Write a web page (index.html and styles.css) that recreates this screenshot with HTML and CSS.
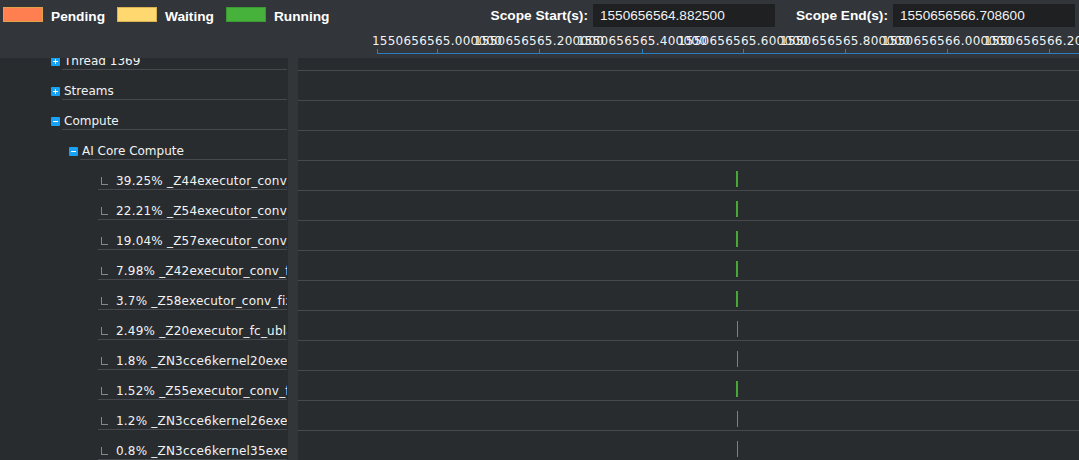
FILE: index.html
```html
<!DOCTYPE html>
<html lang="en">
<head>
<meta charset="utf-8">
<title>Timeline</title>
<link rel="stylesheet" href="styles.css">
</head>
<body>
<div class="app">
  <header class="header">
    <div class="toolbar">
      <div class="legend">
        <span class="swatch swatch-pending"></span><span class="legend-label">Pending</span>
        <span class="swatch swatch-waiting"></span><span class="legend-label">Waiting</span>
        <span class="swatch swatch-running"></span><span class="legend-label">Running</span>
      </div>
      <div class="scope">
        <label class="scope-label">Scope Start(s):</label>
        <input class="scope-input scope-start" value="1550656564.882500">
        <label class="scope-label">Scope End(s):</label>
        <input class="scope-input" value="1550656566.708600">
      </div>
    </div>
    <div class="ruler-row">
      <div class="ruler">
        <div class="axis-line"></div>
        <div class="tick" style="left:0px"></div>
        <div class="tick" style="left:60px"><span class="tick-label">1550656565.000000</span></div>
        <div class="tick" style="left:162px"><span class="tick-label">1550656565.200000</span></div>
        <div class="tick" style="left:265px"><span class="tick-label">1550656565.400000</span></div>
        <div class="tick" style="left:366px"><span class="tick-label">1550656565.600000</span></div>
        <div class="tick" style="left:468px"><span class="tick-label">1550656565.800000</span></div>
        <div class="tick" style="left:570px"><span class="tick-label">1550656566.000000</span></div>
        <div class="tick" style="left:672px"><span class="tick-label">1550656566.200000</span></div>
        <div class="tick" style="left:774px"><span class="tick-label">1550656566.400000</span></div>
      </div>
    </div>
  </header>
  <div class="main">
    <div class="tree">
      <ul class="tree-list">
        <li class="node lvl1">
          <span class="toggle"><svg width="9" height="9" viewBox="0 0 9 9"><rect width="9" height="9" rx="1" fill="#17a2f5"/><rect x="2" y="4" width="5" height="1" fill="#fff"/><rect x="4" y="2" width="1" height="5" fill="#fff"/></svg></span>
          <span class="node-label">Thread 1369</span>
        </li>
        <li class="node lvl1">
          <span class="toggle"><svg width="9" height="9" viewBox="0 0 9 9"><rect width="9" height="9" rx="1" fill="#17a2f5"/><rect x="2" y="4" width="5" height="1" fill="#fff"/><rect x="4" y="2" width="1" height="5" fill="#fff"/></svg></span>
          <span class="node-label">Streams</span>
        </li>
        <li class="node lvl1">
          <span class="toggle"><svg width="9" height="9" viewBox="0 0 9 9"><rect width="9" height="9" rx="1" fill="#17a2f5"/><rect x="2" y="4" width="5" height="1" fill="#fff"/></svg></span>
          <span class="node-label">Compute</span>
        </li>
        <li class="node lvl2">
          <span class="toggle"><svg width="9" height="9" viewBox="0 0 9 9"><rect width="9" height="9" rx="1" fill="#17a2f5"/><rect x="2" y="4" width="5" height="1" fill="#fff"/></svg></span>
          <span class="node-label">AI Core Compute</span>
        </li>
        <li class="node leaf"><span class="node-label"><span class="corner"></span>39.25% _Z44executor_conv_fp16_layer0</span></li>
        <li class="node leaf"><span class="node-label"><span class="corner"></span>22.21% _Z54executor_conv_fp16_layer1</span></li>
        <li class="node leaf"><span class="node-label"><span class="corner"></span>19.04% _Z57executor_conv_fp16_layer2</span></li>
        <li class="node leaf"><span class="node-label"><span class="corner"></span>7.98% _Z42executor_conv_fp16_layer3</span></li>
        <li class="node leaf"><span class="node-label"><span class="corner"></span>3.7% _Z58executor_conv_fixpipe_layer</span></li>
        <li class="node leaf"><span class="node-label"><span class="corner"></span>2.49% _Z20executor_fc_ublas_layer</span></li>
        <li class="node leaf"><span class="node-label"><span class="corner"></span>1.8% _ZN3cce6kernel20executor_pool</span></li>
        <li class="node leaf"><span class="node-label"><span class="corner"></span>1.52% _Z55executor_conv_fp16_layer4</span></li>
        <li class="node leaf"><span class="node-label"><span class="corner"></span>1.2% _ZN3cce6kernel26executor_relu</span></li>
        <li class="node leaf"><span class="node-label"><span class="corner"></span>0.8% _ZN3cce6kernel35executor_add</span></li>
      </ul>
    </div>
    <div class="splitter"></div>
    <div class="timeline">
      <div class="tl-list">
        <div class="tl-row"></div>
        <div class="tl-row"></div>
        <div class="tl-row"></div>
        <div class="tl-row"></div>
        <div class="tl-row"><span class="bar bar-wide" style="left:438px"></span></div>
        <div class="tl-row"><span class="bar bar-wide" style="left:438px"></span></div>
        <div class="tl-row"><span class="bar bar-wide" style="left:438px"></span></div>
        <div class="tl-row"><span class="bar bar-wide" style="left:438px"></span></div>
        <div class="tl-row"><span class="bar bar-wide" style="left:438px"></span></div>
        <div class="tl-row"><span class="bar bar-thin" style="left:439px"></span></div>
        <div class="tl-row"><span class="bar bar-thin" style="left:439px"></span></div>
        <div class="tl-row"><span class="bar bar-wide" style="left:438px"></span></div>
        <div class="tl-row"><span class="bar bar-thin" style="left:439px"></span></div>
        <div class="tl-row"><span class="bar bar-thin" style="left:439px"></span></div>
      </div>
    </div>
  </div>
</div>
</body>
</html>
```

FILE: styles.css
```css
html, body {
  margin: 0;
  padding: 0;
  background: #292c2f;
  overflow: hidden;
}

.app {
  width: 1079px;
  height: 460px;
  display: flex;
  flex-direction: column;
  overflow: hidden;
  font-family: "DejaVu Sans", Verdana, sans-serif;
  font-size: 12px;
  color: #f2f2f2;
}

/* ---------- header ---------- */
.header {
  flex: 0 0 58px;
  background: #32353a;
  display: flex;
  flex-direction: column;
  overflow: hidden;
}

.toolbar {
  height: 31px;
  display: flex;
  flex-shrink: 0;
}

.legend {
  display: flex;
  align-items: flex-start;
  padding-left: 3px;
}

.swatch {
  width: 40px;
  height: 15px;
  margin-top: 7px;
  box-sizing: border-box;
  border: 1px solid;
}
.swatch-pending { background: #ff7f50; border-color: #dfa24a; }
.swatch-waiting { background: #ffd96f; border-color: #d9b251; }
.swatch-running { background: #47b23b; border-color: #3b9a33; }

.legend-label {
  margin: 9px 12px 0 8px;
  font-family: "Liberation Sans", Arial, sans-serif;
  font-weight: bold;
  font-size: 13.7px;
  line-height: 16px;
  color: #ffffff;
}

.scope {
  margin-left: auto;
  margin-right: 4px;
  display: flex;
  align-items: center;
}

.scope-label {
  font-family: "Liberation Sans", Arial, sans-serif;
  font-weight: bold;
  font-size: 13.7px;
  line-height: 16px;
  color: #ffffff;
  margin-right: 5px;
}

.scope-input {
  width: 182px;
  height: 23px;
  box-sizing: border-box;
  border: none;
  outline: none;
  margin: 0;
  padding: 0 7px;
  background: #1f2022;
  color: #f2f2f2;
  font-family: "Liberation Sans", Arial, sans-serif;
  font-size: 13.6px;
}
.scope-start { margin-right: 21px; }

.ruler-row {
  flex: 1;
  padding-left: 377px;
}

.ruler {
  position: relative;
  width: 931px;
  height: 27px;
}

.axis-line {
  position: absolute;
  left: 0;
  right: 0;
  top: 22px;
  height: 1px;
  background: #2a7fc0;
}

.tick {
  position: absolute;
  top: 18px;
  width: 1px;
  height: 5px;
  background: #2a7fc0;
}

.tick-label {
  position: absolute;
  top: -15px;
  left: 0;
  transform: translateX(-50%);
  white-space: nowrap;
  line-height: 14px;
  font-size: 12px;
  letter-spacing: 0.25px;
  color: #f2f2f2;
}

/* ---------- main ---------- */
.main {
  flex: 1;
  display: flex;
  overflow: hidden;
}

.tree {
  width: 288px;
  flex-shrink: 0;
  overflow: hidden;
  padding-right: 1px;
  box-sizing: border-box;
}

.tree-list {
  list-style: none;
  margin: -18px 0 0 0;
  padding: 0;
}

.node {
  display: flex;
  height: 30px;
}
.lvl1 { padding-left: 51px; }
.lvl2 { padding-left: 69px; }
.leaf { padding-left: 98px; }

.toggle {
  width: 9px;
  height: 9px;
  margin-top: 17px;
  margin-right: 2px;
  flex-shrink: 0;
}
.toggle svg { display: block; }

.node-label {
  flex: 1;
  min-width: 0;
  height: 30px;
  box-sizing: border-box;
  padding: 14px 0 0 2px;
  line-height: 14px;
  white-space: nowrap;
  overflow: hidden;
  border-bottom: 1px solid #46494d;
}
.leaf .node-label {
  padding-left: 3px;
  letter-spacing: 0.2px;
}

.corner {
  display: inline-block;
  width: 6px;
  height: 7px;
  border-left: 1px solid #85888b;
  border-bottom: 1px solid #85888b;
  margin-right: 8px;
}

.splitter {
  width: 10px;
  flex-shrink: 0;
  background: #333639;
}

.timeline {
  flex: 1;
  overflow: hidden;
}

.tl-list {
  margin-top: -17px;
}

.tl-row {
  position: relative;
  height: 30px;
  box-sizing: border-box;
  border-bottom: 1px solid #46494d;
}

.bar {
  position: absolute;
  top: 10px;
  height: 16px;
}
.bar-wide { width: 2px; background: #47a934; }
.bar-thin { width: 1px; background: #5f9a4e; }
```
